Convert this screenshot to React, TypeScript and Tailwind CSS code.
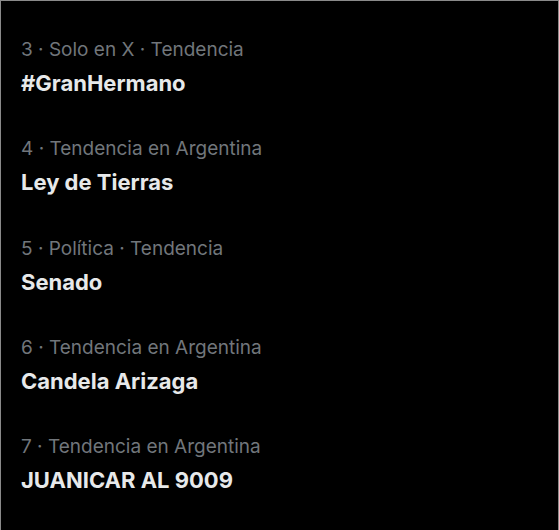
const trends = [
  { rank: 3, context: 'Solo en X · Tendencia', name: '#GranHermano' },
  { rank: 4, context: 'Tendencia en Argentina', name: 'Ley de Tierras' },
  { rank: 5, context: 'Política · Tendencia', name: 'Senado' },
  { rank: 6, context: 'Tendencia en Argentina', name: 'Candela Arizaga' },
  { rank: 7, context: 'Tendencia en Argentina', name: 'JUANICAR AL 9009' },
]

export default function App() {
  return (
    <div
      className="h-[530px] w-[559px] overflow-hidden bg-black border-t border-l border-r border-[#8a8a8a]"
      style={{ fontFamily: 'Inter, "Noto Sans", sans-serif' }}
    >
      <ul className="pt-[17px]">
        {trends.map((t) => (
          <li key={t.rank} className="px-5 pt-5 pb-[20.25px]">
            <div className="text-[19px] leading-[24px] text-[#71767b]">
              {t.rank} · {t.context}
            </div>
            <div className="mt-[7px] text-[22px] leading-[28px] font-bold text-[#e7e9ea]">
              {t.name}
            </div>
          </li>
        ))}
      </ul>
    </div>
  )
}
